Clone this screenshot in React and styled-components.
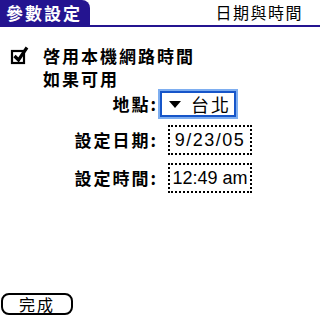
import styled, { createGlobalStyle } from 'styled-components';

const GlobalStyle = createGlobalStyle`
  html, body {
    margin: 0;
    padding: 0;
    background: #fff;
  }
  body {
    font-family: "Noto Sans CJK TC", "Noto Sans", sans-serif;
    color: #000;
  }
  * {
    box-sizing: border-box;
  }
`;

const CJK = '"Noto Sans CJK TC", "Noto Sans CJK SC", sans-serif';

function App() {
  return (
    <Screen>
      <GlobalStyle />
      <TitleBar>
        <Tab>參數設定</Tab>
        <PanelName>日期與時間</PanelName>
      </TitleBar>
      <Body>
        <CheckRow>
          <CheckBox viewBox="0 0 20 20">
            <rect x="2" y="6" width="12" height="12" fill="none" stroke="#000" strokeWidth="2.2" />
            <path d="M4.5 11 L8.5 15 L17 2.5" fill="none" stroke="#000" strokeWidth="3.2" />
          </CheckBox>
          <Label>啓用本機網路時間</Label>
        </CheckRow>
        <SubLabel>如果可用</SubLabel>
        <Form>
          <FieldName>地點:</FieldName>
          <Picker>
            <Arrow />
            <PickerText>台北</PickerText>
          </Picker>
          <FieldName>設定日期:</FieldName>
          <Selector $spacing={1.5}>9/23/05</Selector>
          <FieldName $shift={2}>設定時間:</FieldName>
          <Selector $shift={2}>12:49 am</Selector>
        </Form>
        <Spacer />
        <Footer>
          <Button>完成</Button>
        </Footer>
      </Body>
    </Screen>
  );
}

export default App;

const Screen = styled.div`
  width: 320px;
  height: 320px;
  display: flex;
  flex-direction: column;
  background: #fff;
  overflow: hidden;
`;

const TitleBar = styled.div`
  display: flex;
  align-items: flex-end;
  justify-content: space-between;
  height: 27px;
  border-bottom: 2px solid #241490;
`;

const Tab = styled.div`
  width: 90px;
  height: 25px;
  padding-left: 6px;
  background: #241490;
  border-top-right-radius: 8px;
  color: #fff;
  font-family: ${CJK};
  font-weight: 700;
  font-size: 17px;
  letter-spacing: 2px;
  line-height: 25px;
  white-space: nowrap;
`;

const PanelName = styled.div`
  margin-right: 17px;
  font-family: ${CJK};
  font-size: 16px;
  letter-spacing: 1.5px;
  line-height: 22px;
  padding-bottom: 2px;
`;

const Body = styled.div`
  flex: 1;
  display: flex;
  flex-direction: column;
  padding-top: 19px;
`;

const CheckRow = styled.div`
  display: flex;
  align-items: center;
  padding-left: 10px;
  height: 20px;
`;

const CheckBox = styled.svg`
  width: 20px;
  height: 20px;
  margin-right: 13px;
  margin-top: -2px;
`;

const Label = styled.div`
  font-family: ${CJK};
  font-weight: 700;
  font-size: 17px;
  letter-spacing: 2px;
  line-height: 20px;
  white-space: nowrap;
`;

const SubLabel = styled(Label)`
  padding-left: 43px;
  margin-top: 3px;
`;

const Form = styled.div`
  display: grid;
  grid-template-columns: 158px auto;
  grid-auto-rows: 30px;
  row-gap: 6px;
  align-items: center;
  justify-items: start;
`;

const FieldName = styled.div`
  justify-self: end;
  margin-top: ${({ $shift }) => ($shift || 0) * 2}px;
  font-family: ${CJK};
  font-weight: 700;
  font-size: 17px;
  letter-spacing: 2px;
  line-height: 20px;
  white-space: nowrap;
`;

const Picker = styled.div`
  display: flex;
  align-items: center;
  width: 76px;
  height: 26px;
  margin-left: 2px;
  padding-left: 7px;
  border: 2px solid #1655c9;
  box-shadow: 0 0 0 2px #7eaef0;
  background: #fff;
`;

const Arrow = styled.span`
  width: 0;
  height: 0;
  border-left: 6px solid transparent;
  border-right: 6px solid transparent;
  border-top: 7px solid #000;
  margin-right: 10px;
`;

const PickerText = styled.span`
  font-family: ${CJK};
  font-size: 18px;
  letter-spacing: 2px;
  line-height: 22px;
  white-space: nowrap;
`;

const Selector = styled.div`
  width: 84px;
  height: 30px;
  margin-left: 10px;
  margin-top: ${({ $shift }) => ($shift || 0) * 2}px;
  border: 2px dotted #000;
  display: flex;
  align-items: center;
  justify-content: center;
  font-family: "Liberation Sans", Arial, sans-serif;
  font-size: 18px;
  letter-spacing: ${({ $spacing }) => $spacing || 0}px;
  line-height: 26px;
  white-space: nowrap;
`;

const Spacer = styled.div`
  flex: 1;
`;

const Footer = styled.div`
  display: flex;
  padding: 0 0 5px 1px;
`;

const Button = styled.div`
  width: 72px;
  height: 22px;
  border: 2px solid #000;
  border-radius: 8px;
  display: flex;
  align-items: center;
  justify-content: center;
  font-family: ${CJK};
  font-size: 16px;
  letter-spacing: 2px;
  line-height: 18px;
`;
